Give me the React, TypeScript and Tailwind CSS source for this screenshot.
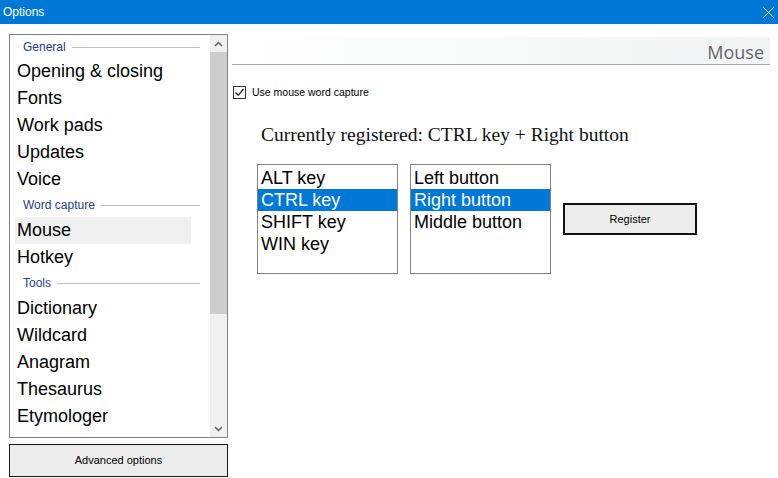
const sans = { fontFamily: '"Liberation Sans", Arial, sans-serif' }

type Entry = { kind: 'header'; label: string; first?: boolean } | { kind: 'item'; label: string; active?: boolean }

const entries: Entry[] = [
  { kind: 'header', label: 'General', first: true },
  { kind: 'item', label: 'Opening & closing' },
  { kind: 'item', label: 'Fonts' },
  { kind: 'item', label: 'Work pads' },
  { kind: 'item', label: 'Updates' },
  { kind: 'item', label: 'Voice' },
  { kind: 'header', label: 'Word capture' },
  { kind: 'item', label: 'Mouse', active: true },
  { kind: 'item', label: 'Hotkey' },
  { kind: 'header', label: 'Tools' },
  { kind: 'item', label: 'Dictionary' },
  { kind: 'item', label: 'Wildcard' },
  { kind: 'item', label: 'Anagram' },
  { kind: 'item', label: 'Thesaurus' },
  { kind: 'item', label: 'Etymologer' },
]

const keys = ['ALT key', 'CTRL key', 'SHIFT key', 'WIN key']
const buttons = ['Left button', 'Right button', 'Middle button']

function Chevron({ up }: { up?: boolean }) {
  return (
    <svg width="9" height="6" viewBox="0 0 9 6" className="block">
      <path
        d={up ? 'M1 5 L4.5 1.5 L8 5' : 'M1 1 L4.5 4.5 L8 1'}
        fill="none"
        stroke="#606060"
        strokeWidth="1.5"
      />
    </svg>
  )
}

function ListBox({ items, selected }: { items: string[]; selected: number }) {
  return (
    <div className="w-[141px] h-[110px] border border-[#828282] bg-white pt-[2px]">
      {items.map((label, i) => (
        <div
          key={label}
          className={`h-[22px] leading-[22px] pl-[3px] text-[18px] ${
            i === selected ? 'bg-[#0078d7] text-white' : 'text-black'
          }`}
        >
          {label}
        </div>
      ))}
    </div>
  )
}

export default function App() {
  return (
    <div className="w-[778px] h-[478px] bg-white flex flex-col overflow-hidden" style={sans}>
      <div className="h-[24px] bg-[#0078d7] flex items-center justify-between pl-[3px] pr-[4px]">
        <span className="text-white text-[12px]">Options</span>
        <svg width="11" height="11" viewBox="0 0 11 11">
          <path d="M0.5 0.5 L10.5 10.5 M10.5 0.5 L0.5 10.5" stroke="white" strokeWidth="1" />
        </svg>
      </div>

      <div className="flex flex-1">
        {/* left nav */}
        <div className="w-[232px] pl-[9px] pt-[10px] flex flex-col">
          <div className="w-[219px] h-[404px] border border-[#828282] bg-white flex">
            <div className="flex-1 flex flex-col pt-[1px]">
              {entries.map((e) =>
                e.kind === 'header' ? (
                  <div
                    key={e.label}
                    className={`${e.first ? 'h-[22px]' : 'h-[24px]'} flex items-center pl-[13px] pr-[10px] gap-[6px]`}
                  >
                    <span className="text-[12px] text-[#23408e]">{e.label}</span>
                    <div className="flex-1 h-px bg-[#b8c0cc]" />
                  </div>
                ) : (
                  <div
                    key={e.label}
                    className={`h-[27px] leading-[27px] ml-[5px] w-[176px] pl-[2px] text-[18px] text-black ${
                      e.active ? 'bg-[#f0f0f0]' : ''
                    }`}
                  >
                    {e.label}
                  </div>
                )
              )}
            </div>
            <div className="w-[17px] bg-[#f0f0f0] flex flex-col">
              <div className="h-[17px] flex items-center justify-center">
                <Chevron up />
              </div>
              <div className="h-[262px] bg-[#cdcdcd]" />
              <div className="flex-1" />
              <div className="h-[17px] flex items-center justify-center">
                <Chevron />
              </div>
            </div>
          </div>
          <button className="mt-[6px] w-[219px] h-[33px] border border-[#1a1a1a] bg-[#ececec] text-[11px] text-black">
            Advanced options
          </button>
        </div>

        {/* right content */}
        <div className="flex-1 pt-[13px] pr-[8px] flex flex-col">
          <div className="h-[28px] border-b border-[#a8a8a8] bg-gradient-to-r from-white to-[#f1f4f4] flex items-center justify-end pr-[6px] pt-[3px]">
            <span className="text-[18px] text-[#666666]" style={{ fontFamily: '"Open Sans", "Liberation Sans", sans-serif' }}>
              Mouse
            </span>
          </div>

          <div className="mt-[20px] pl-[1px] flex items-center gap-[6px]">
            <div className="w-[13px] h-[13px] border border-[#333333] bg-white flex items-center justify-center">
              <svg width="11" height="11" viewBox="0 0 11 11">
                <path d="M1.5 5.5 L4.2 8.3 L9.5 2" fill="none" stroke="#222" strokeWidth="1.3" />
              </svg>
            </div>
            <span className="text-[10.5px] text-black">Use mouse word capture</span>
          </div>

          <div
            className="mt-[22px] pl-[29px] text-[19.5px] leading-[24px] text-[#111]"
            style={{ fontFamily: '"Liberation Serif", "Times New Roman", serif' }}
          >
            Currently registered: CTRL key + Right button
          </div>

          <div className="mt-[17px] pl-[25px] flex items-start gap-[12px]">
            <ListBox items={keys} selected={1} />
            <ListBox items={buttons} selected={1} />
            <button className="mt-[39px] w-[134px] h-[32px] border-2 border-[#111] bg-[#ececec] text-[11px] text-black">
              Register
            </button>
          </div>
        </div>
      </div>
    </div>
  )
}
